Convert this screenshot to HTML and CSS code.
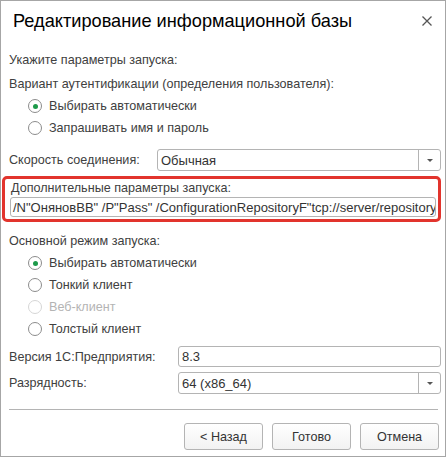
FILE: index.html
```html
<!DOCTYPE html>
<html>
<head>
    <link rel="stylesheet" href="styles.css">
</head>
<body>
<div class="dialog">
    <div class="title">
        <span>Редактирование информационной базы</span>
        <svg class="close" width="10" height="10" viewBox="0 0 10 10">
            <path d="M0.5 0.5 L9.5 9.5 M9.5 0.5 L0.5 9.5" stroke="#555" stroke-width="1.3"/>
        </svg>
    </div>

    <div class="content">
        <div class="line hint">Укажите параметры запуска:</div>
        <div class="line auth">Вариант аутентификации (определения пользователя):</div>
        <div class="radios">
            <div class="radio checked"><span class="dot"></span>Выбирать автоматически</div>
            <div class="radio"><span class="dot"></span>Запрашивать имя и пароль</div>
        </div>

        <div class="field speed">
            <label>Скорость соединения:</label>
            <div class="box select"><span class="value">Обычная</span><span class="arrow"></span></div>
        </div>

        <div class="highlight">
            <div class="line">Дополнительные параметры запуска:</div>
            <div class="box wide"><span class="value">/N"ОняновВВ" /P"Pass" /ConfigurationRepositoryF"tcp://server/repository</span></div>
        </div>

        <div class="line mode">Основной режим запуска:</div>
        <div class="radios">
            <div class="radio checked"><span class="dot"></span>Выбирать автоматически</div>
            <div class="radio"><span class="dot"></span>Тонкий клиент</div>
            <div class="radio disabled"><span class="dot"></span>Веб-клиент</div>
            <div class="radio"><span class="dot"></span>Толстый клиент</div>
        </div>

        <div class="field version">
            <label>Версия 1С:Предприятия:</label>
            <div class="box"><span class="value">8.3</span></div>
        </div>
        <div class="field bits">
            <label>Разрядность:</label>
            <div class="box select"><span class="value">64 (x86_64)</span><span class="arrow"></span></div>
        </div>

        <div class="separator"></div>

        <div class="buttons">
            <button>&lt; Назад</button>
            <button>Готово</button>
            <button>Отмена</button>
        </div>
    </div>
</div>
</body>
</html>
```

FILE: styles.css
```css
body {
    margin: 0;
    background: #fff;
    font-family: "Liberation Sans", Arial, sans-serif;
    font-size: 12.6px;
    color: #404040;
}
.dialog {
    width: 446px;
    height: 457px;
    box-sizing: border-box;
    border: 1px solid #a6a6a6;
    background: #fff;
}
.title {
    height: 40px;
    display: flex;
    align-items: center;
    justify-content: space-between;
    padding: 0 13px 0 12px;
    font-size: 18.2px;
    color: #000;
}
.content {
    padding: 0 4px 0 8px;
}
.line {
    height: 22px;
    line-height: 22px;
}
.hint {
    margin-top: 8px;
}
.auth {
    margin-top: 2px;
}
.radios {
    padding-left: 19px;
}
.radio {
    height: 22px;
    display: flex;
    align-items: center;
}
.dot {
    width: 14px;
    height: 14px;
    box-sizing: border-box;
    border: 1px solid #8c8c8c;
    border-radius: 50%;
    margin-right: 7px;
    display: flex;
    align-items: center;
    justify-content: center;
}
.radio.checked .dot::after {
    content: "";
    width: 5px;
    height: 5px;
    border-radius: 50%;
    background: #1d9a4a;
}
.radio.disabled {
    color: #b4b4b4;
}
.radio.disabled .dot {
    border-color: #d6d6d6;
}
.field {
    display: flex;
    align-items: center;
    height: 22px;
}
.field label {
    flex: none;
}
.speed {
    margin-top: 10px;
}
.speed label {
    width: 148px;
}
.version label, .bits label {
    width: 169px;
}
.version {
    margin-top: 6px;
    height: 21px;
}
.version .box {
    height: 21px;
}
.bits {
    margin-top: 5px;
}
.box {
    flex: 1;
    height: 22px;
    box-sizing: border-box;
    border: 1px solid #b4b4b4;
    border-radius: 3px;
    display: flex;
    align-items: center;
    background: #fff;
}
.value {
    flex: 1;
    padding-left: 3px;
    font-size: 13px;
    white-space: nowrap;
    overflow: hidden;
    color: #333;
}
.select .arrow {
    width: 21px;
    height: 100%;
    border-left: 1px solid #b4b4b4;
    position: relative;
}
.select .arrow::after {
    content: "";
    position: absolute;
    left: 8px;
    top: 9px;
    border-left: 3px solid transparent;
    border-right: 3px solid transparent;
    border-top: 3px solid #555;
}
.highlight {
    margin: 5px 0 0 -7px;
    padding: 0 2px 0 5px;
    border: 3px solid #e2342d;
    border-radius: 5px;
    height: 46px;
    box-sizing: border-box;
}
.highlight .line {
    height: 18px;
    line-height: 18px;
    padding-left: 1px;
}
.wide {
    height: 20px;
}
.wide .value {
    padding-left: 2px;
}
.mode {
    margin-top: 8px;
}
.separator {
    margin: 15px 3px 0 0;
    border-top: 1px solid #b4b4b4;
}
.buttons {
    display: flex;
    justify-content: flex-end;
    gap: 9px;
    margin-top: 13px;
    padding-right: 2px;
}
button {
    width: 79px;
    height: 27px;
    font-family: "Liberation Sans", Arial, sans-serif;
    font-size: 12.6px;
    color: #333;
    border: 1px solid #b4b4b4;
    border-radius: 3px;
    background: linear-gradient(#ffffff, #f2f2f2);
}
```
